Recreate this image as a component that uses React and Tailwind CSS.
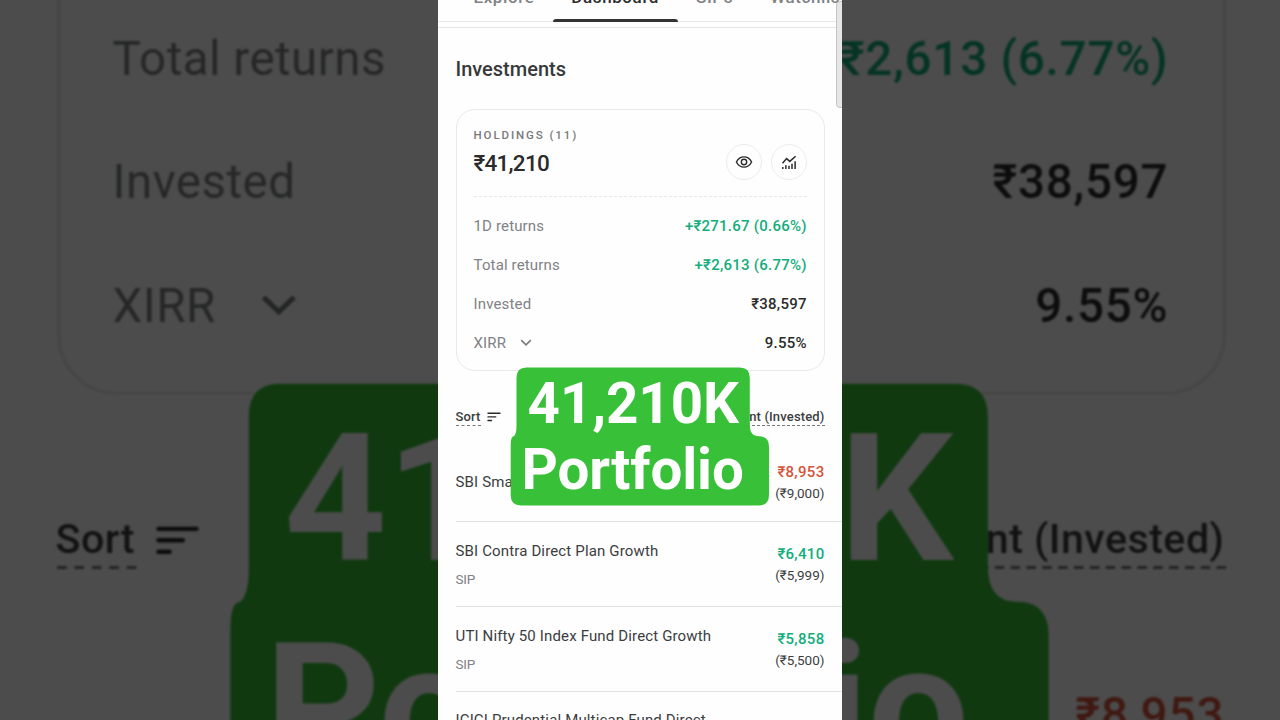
import clsx from 'clsx'

const tabs = ['Explore', 'Dashboard', 'SIPs', 'Watchlist']

const stats = [
  { label: '1D returns', value: '+₹271.67 (0.66%)', gain: true },
  { label: 'Total returns', value: '+₹2,613 (6.77%)', gain: true },
  { label: 'Invested', value: '₹38,597' },
  { label: 'XIRR', value: '9.55%', expandable: true },
]

const funds = [
  { name: 'SBI Small Cap Fund', current: '₹8,953', invested: '(₹9,000)', loss: true },
  { name: 'SBI Contra Direct Plan Growth', sip: true, current: '₹6,410', invested: '(₹5,999)' },
  { name: 'UTI Nifty 50 Index Fund Direct Growth', sip: true, current: '₹5,858', invested: '(₹5,500)' },
]

function EyeIcon() {
  return (
    <svg width="18" height="14" viewBox="0 0 18 14" fill="none" stroke="#2b2b2b" strokeWidth="1.4">
      <path d="M1.4 7C3 3.8 5.8 1.9 9 1.9S15 3.8 16.6 7C15 10.2 12.2 12.1 9 12.1S3 10.2 1.4 7Z" />
      <circle cx="9" cy="7" r="2.7" />
    </svg>
  )
}

function ChartIcon() {
  return (
    <svg width="16" height="16" viewBox="0 0 16 16" fill="none" stroke="#2b2b2b" strokeWidth="1.5">
      <path d="M1.5 9.3 5.6 4.6 8.8 7.4 14.6 2.2" />
      <path d="M1.8 13.1V14.9M4.9 11.2V14.9M8 11.8V14.9M11 9.7V14.9M14.1 7.2V14.9" />
    </svg>
  )
}

function SortIcon() {
  return (
    <svg width="14" height="11" viewBox="0 0 14 11" fill="none" stroke="#2b2b2b" strokeWidth="1.4" strokeLinecap="round">
      <path d="M1 1.3H13M1 4.9H8.7M1 8.5H4.5" />
    </svg>
  )
}

function Chevron() {
  return (
    <svg width="12" height="8" viewBox="0 0 12 8" fill="none" stroke="#77797c" strokeWidth="1.6">
      <path d="M1.2 1.2 6 5.8 10.8 1.2" />
    </svg>
  )
}

function RoundButton({ children }) {
  return (
    <div className="flex h-9 w-9 items-center justify-center rounded-full border border-[#ececec]">
      {children}
    </div>
  )
}

function TabBar() {
  return (
    <div className="h-7 overflow-hidden border-b border-[#e6e6e6]">
      <div className="-mt-[15px] ml-[17px] flex w-[440px]">
        {tabs.map((tab) => (
          <div
            key={tab}
            className={clsx(
              'relative flex h-[37px] flex-none px-[18.5px] text-[17px] font-medium leading-6 tracking-[0.6px]',
              tab === 'Dashboard' ? 'text-[#2b2b2b]' : 'text-[#808285]'
            )}
          >
            {tab}
            {tab === 'Dashboard' && (
              <span className="absolute inset-x-0 bottom-0 h-[3px] rounded-t-[3px] bg-[#333]" />
            )}
          </div>
        ))}
      </div>
      <div className="-mt-px h-px bg-[#e8e8e8]" />
    </div>
  )
}

function HoldingsCard() {
  return (
    <div className="mx-[17.5px] mt-[26px] h-[262px] rounded-[19px] border border-[#e9e9e9] px-[17px] pt-[18px]">
      <div className="flex justify-between">
        <div>
          <div className="text-[11.5px] font-medium leading-[14px] tracking-[1.9px] text-[#77797c]">HOLDINGS (11)</div>
          <div className="mt-[7.5px] text-[22.5px] font-medium leading-[26px] tracking-[-0.75px] text-[#2b2b2b]">₹41,210</div>
        </div>
        <div className="mt-[16px] flex gap-[9px]">
          <RoundButton>
            <EyeIcon />
          </RoundButton>
          <RoundButton>
            <ChartIcon />
          </RoundButton>
        </div>
      </div>
      <div className="mt-[15.5px] border-t border-dashed border-[#e8e8e8]" />
      <div className="mt-[10.3px]">
        {stats.map((s) => (
          <div key={s.label} className="flex h-[39px] items-center justify-between text-[15px]">
            <div className="flex items-center gap-[14px] tracking-[0.15px] text-[#808285]">
              {s.label}
              {s.expandable && <Chevron />}
            </div>
            <div className={clsx('-mr-[0.3px] font-medium tracking-[0.25px]', s.gain ? 'text-[#12ad7c]' : 'text-[#2b2b2b]')}>
              {s.value}
            </div>
          </div>
        ))}
      </div>
    </div>
  )
}

function FundRow({ fund }) {
  return (
    <div
      className={clsx(
        'ml-[17.5px] flex items-center justify-between border-b border-[#e2e2e2] pr-[17.5px]',
        fund.sip ? 'h-[85px]' : 'h-[77px] pb-[1.5px]'
      )}
    >
      <div className="whitespace-nowrap text-[#3c3d3f]">
        <div className="text-[15px] leading-5 tracking-[0.15px]">{fund.name}</div>
        {fund.sip && <div className="mt-[9px] text-[13.5px] leading-[18px] tracking-[-0.2px] text-[#808285]">SIP</div>}
      </div>
      <div className="text-right">
        <div
          className={clsx(
            'text-[15px] font-medium leading-[22px] tracking-[0.3px]',
            fund.loss ? 'text-[#d5543a]' : 'text-[#12ad7c]'
          )}
        >
          {fund.current}
        </div>
        <div className="text-[13.5px] leading-[21px] text-[#3c3d3f]">{fund.invested}</div>
      </div>
    </div>
  )
}

// Two-line sticker with rounded steps where the lines differ in width
function Caption() {
  return (
    <div className="absolute left-[72px] top-[367px] h-[139px] w-[260px] font-['Roboto',sans-serif]">
      <svg className="absolute inset-0" width="260" height="139" viewBox="0 0 260 139">
        <path
          fill="#38c038"
          d="M16.5.5H229.5Q239.8.5 239.8 10.8V58Q239.8 69.3 249 69.3Q259 69.3 259 80V128Q259 138.5 248.5 138.5H11Q.7 138.5 .7 128V78Q.7 69.3 3.8 69.3Q6.5 67 6.5 59V10.8Q6.5.5 16.5.5Z"
        />
      </svg>
      <div className="relative whitespace-nowrap text-[56.5px] font-bold leading-[66px] text-white">
        <div className="pl-[17.6px] pt-[3.6px] tracking-[-0.1px]">41,210K</div>
        <div className="pl-[11.6px] tracking-[-0.1px]">Portfolio</div>
      </div>
    </div>
  )
}

function Phone() {
  return (
    <div className="relative h-[720px] w-[404px] overflow-hidden bg-[#fefefe] font-['Roboto',sans-serif]">
      <TabBar />
      <h1 className="ml-[17.5px] mt-[28px] text-[20px] font-medium leading-[27px] text-[#38393b]">Investments</h1>
      <HoldingsCard />
      <div className="mx-[17.5px] mt-[37px] flex h-[37px] items-start justify-between text-[13px] font-medium leading-[17px] text-[#3c3d3f]">
        <div className="flex items-center gap-[6.5px]">
          <span className="border-b border-dashed border-[#777] tracking-[0.15px]">Sort</span>
          <SortIcon />
        </div>
        <span className="border-b border-dashed border-[#777] tracking-[0.15px]">Current (Invested)</span>
      </div>
      {funds.map((fund) => (
        <FundRow key={fund.name} fund={fund} />
      ))}
      <div className="ml-[17.5px] mt-[18px] text-[15px] leading-5 tracking-[0.15px] text-[#3c3d3f]">
        ICICI Prudential Multicap Fund Direct
      </div>
      <div className="absolute -right-1 top-px h-[107px] w-[10px] rounded-[4px] border border-[#c4c4c4] bg-[#e6e6e6]" />
      <Caption />
    </div>
  )
}

export default function App() {
  return (
    <div className="relative flex h-[720px] w-[1280px] justify-center overflow-hidden bg-[#fefefe]">
      {/* Enlarged, dimmed copy fills the space beside the phone */}
      <div className="absolute inset-0 flex justify-center blur-[0.8px]" aria-hidden="true">
        <div className="scale-[3.168]">
          <Phone />
        </div>
      </div>
      <div className="absolute inset-0 bg-black/70" />
      <div className="relative">
        <Phone />
      </div>
    </div>
  )
}
